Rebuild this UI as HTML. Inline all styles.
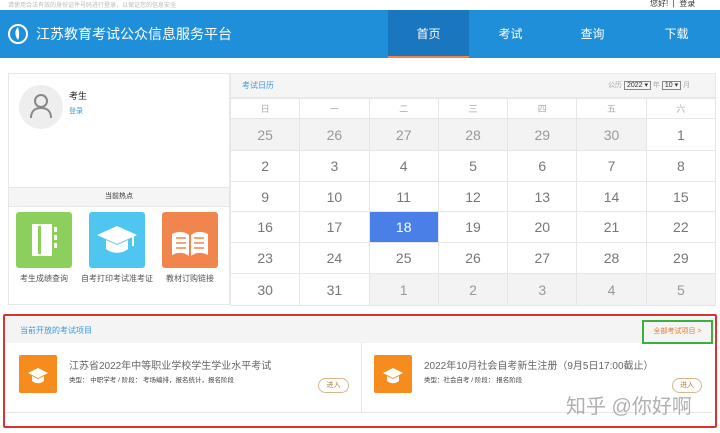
<!DOCTYPE html>
<html><head><meta charset="utf-8"><style>
*{margin:0;padding:0;box-sizing:border-box}
body{width:720px;height:433px;overflow:hidden;background:#fff;font-family:"Liberation Sans","Noto Sans CJK SC",sans-serif;position:relative;color:#333}
.a{position:absolute}
.nav{left:0;top:10px;width:720px;height:48px;background:#1f8fd9}
.tab{top:10px;height:48px;width:81px;color:#fff;font-size:12px;text-align:center;line-height:48px}
.cal td{border:1px solid #e6e6e6;text-align:center;color:#777;font-size:14px}
.cal{border-collapse:collapse;position:absolute;left:230px;top:98px;width:486px}
.g{background:#f3f3f3;color:#999!important}
.wk td{font-size:9px;color:#aaa;height:20px}
.ic{width:56px;height:56px;top:212px;border-radius:3px}
.lb{font-size:8px;color:#555;text-align:center;width:80px;top:274px;line-height:9px}
</style></head><body>
<div class="a" style="left:8px;top:0;font-size:6px;color:#bbb">请使用合法有效的身份证件号码进行登录，以保证您的信息安全</div>
<div class="a" style="left:650px;top:-2px;font-size:8px;color:#333">您好! &nbsp;| &nbsp;登录</div>
<div class="a nav"></div>
<svg class="a" style="left:7px;top:23px" width="22" height="22" viewBox="0 0 22 22"><circle cx="11" cy="11" r="9" fill="none" stroke="#fff" stroke-width="2"/><path d="M11 4c-4 4-3 9 0 13 2-4 1-9 0-13z" fill="#fff"/></svg>
<div class="a" style="left:36px;top:24px;color:#fff;font-size:14px">江苏教育考试公众信息服务平台</div>
<div class="a tab" style="left:388px;background:#1a76bf;border-bottom:2px solid #e8874a">首页</div>
<div class="a tab" style="left:470px">考试</div>
<div class="a tab" style="left:552px">查询</div>
<div class="a tab" style="left:636px">下载</div>

<div class="a" style="left:8px;top:73px;width:222px;height:232px;border:1px solid #e8e8e8"></div>
<div class="a" style="left:19px;top:85px;width:44px;height:44px;border-radius:50%;background:#eee"></div>
<svg class="a" style="left:29px;top:93px" width="24" height="26" viewBox="0 0 24 26"><circle cx="12" cy="8" r="6" fill="none" stroke="#888" stroke-width="2"/><path d="M2 25c0-7 4-10 10-10s10 3 10 10" fill="none" stroke="#888" stroke-width="2"/></svg>
<div class="a" style="left:69px;top:89px;font-size:9px;color:#222">考生</div>
<div class="a" style="left:69px;top:106px;font-size:7px;color:#3a9ad9">登录</div>
<div class="a" style="left:8px;top:187px;width:222px;height:20px;background:#f5f5f5;border:1px solid #e6e6e6;font-size:7px;text-align:center;line-height:18px">当前热点</div>
<div class="a ic" style="left:16px;background:#8ccf5c"><svg width="56" height="56"><rect x="16" y="12" width="20" height="32" fill="#fff"/><rect x="22" y="14" width="3" height="28" fill="#8ccf5c"/><rect x="38" y="15" width="3" height="5" fill="#fff"/><rect x="38" y="23" width="3" height="5" fill="#fff"/><rect x="38" y="31" width="3" height="5" fill="#fff"/></svg></div>
<div class="a ic" style="left:89px;background:#4ec6f0"><svg width="56" height="56"><path d="M28 14 8 23l20 9 20-9z" fill="#fff"/><path d="M17 28v9c6 5 16 5 22 0v-9l-11 5z" fill="#fff"/><path d="M44 24v10" stroke="#fff" stroke-width="2"/></svg></div>
<div class="a ic" style="left:162px;background:#f0864d"><svg width="56" height="56"><path d="M10 22c6-3 12-3 17 1v21c-5-4-11-4-17-1zM46 22c-6-3-12-3-17 1v21c5-4 11-4 17-1z" fill="#fff"/><path d="M14 26h10M14 31h10M14 36h10M32 26h10M32 31h10M32 36h10" stroke="#f0864d" stroke-width="1.5"/></svg></div>
<div class="a lb" style="left:4px">考生成绩查询</div>
<div class="a lb" style="left:77px">自考打印考试准考证</div>
<div class="a lb" style="left:150px">教材订购链接</div>

<div class="a" style="left:230px;top:73px;width:486px;height:25px;background:#f5f5f5;border:1px solid #e8e8e8"></div>
<div class="a" style="left:242px;top:80px;font-size:8px;color:#3a9ad9">考试日历</div>
<div class="a" style="left:608px;top:80px;font-size:7px;color:#aaa">公历 <span style="border:1px solid #888;color:#333;padding:0 2px">2022 ▾</span> 年 <span style="border:1px solid #888;color:#333;padding:0 2px">10 ▾</span> 月</div>
<table class="cal">
<tr class="wk"><td>日</td><td>一</td><td>二</td><td>三</td><td>四</td><td>五</td><td>六</td></tr>
<tr style="height:32px"><td class="g">25</td><td class="g">26</td><td class="g">27</td><td class="g">28</td><td class="g">29</td><td class="g">30</td><td>1</td></tr>
<tr style="height:31px"><td>2</td><td>3</td><td>4</td><td>5</td><td>6</td><td>7</td><td>8</td></tr>
<tr style="height:30px"><td>9</td><td>10</td><td>11</td><td>12</td><td>13</td><td>14</td><td>15</td></tr>
<tr style="height:31px"><td>16</td><td>17</td><td style="background:#4a7fe8;color:#fff">18</td><td>19</td><td>20</td><td>21</td><td>22</td></tr>
<tr style="height:31px"><td>23</td><td>24</td><td>25</td><td>26</td><td>27</td><td>28</td><td>29</td></tr>
<tr style="height:32px"><td>30</td><td>31</td><td class="g">1</td><td class="g">2</td><td class="g">3</td><td class="g">4</td><td class="g">5</td></tr>
</table>

<div class="a" style="left:3px;top:314px;width:714px;height:114px;border:2px solid #e03030;border-radius:2px"></div>
<div class="a" style="left:6px;top:317px;width:708px;height:26px;background:#f4f4f4"></div>
<div class="a" style="left:20px;top:325px;font-size:8px;color:#3a9ad9">当前开放的考试项目</div>
<div class="a" style="left:642px;top:320px;width:71px;height:24px;border:2px solid #3cb03c;font-size:7px;color:#e87a2c;text-align:center;line-height:20px">全部考试项目 &gt;</div>
<div class="a" style="left:6px;top:412px;width:706px;height:1px;background:#e6e6e6"></div>
<div class="a" style="left:361px;top:343px;width:1px;height:69px;background:#e6e6e6"></div>
<div class="a" style="left:19px;top:355px;width:38px;height:38px;background:#f68b1e;border-radius:2px"><svg width="38" height="38"><path d="M19 13 9 18l10 5 10-5z M13 21v5c4 3 8 3 12 0v-5l-6 3z" fill="#fff"/></svg></div>
<div class="a" style="left:69px;top:357px;font-size:10px;color:#666">江苏省2022年中等职业学校学生学业水平考试</div>
<div class="a" style="left:69px;top:374px;font-size:6.5px;color:#444">类型： 中职学考 / 阶段： 考场编排，报名统计，报名阶段</div>
<div class="a" style="left:318px;top:378px;width:31px;height:15px;border:1px solid #d9b58c;border-radius:8px;font-size:7px;color:#b07a3a;text-align:center;line-height:13px">进入</div>
<div class="a" style="left:374px;top:355px;width:38px;height:38px;background:#f68b1e;border-radius:2px"><svg width="38" height="38"><path d="M19 13 9 18l10 5 10-5z M13 21v5c4 3 8 3 12 0v-5l-6 3z" fill="#fff"/></svg></div>
<div class="a" style="left:424px;top:357px;font-size:10px;color:#666">2022年10月社会自考新生注册（9月5日17:00截止）</div>
<div class="a" style="left:424px;top:374px;font-size:6.5px;color:#444">类型：社会自考 / 阶段： 报名阶段</div>
<div class="a" style="left:672px;top:378px;width:30px;height:15px;border:1px solid #d9b58c;border-radius:8px;font-size:7px;color:#b07a3a;text-align:center;line-height:13px">进入</div>
<div class="a" style="left:566px;top:390px;font-size:20px;color:rgba(150,150,150,0.75)">知乎 @你好啊</div>
</body></html>
